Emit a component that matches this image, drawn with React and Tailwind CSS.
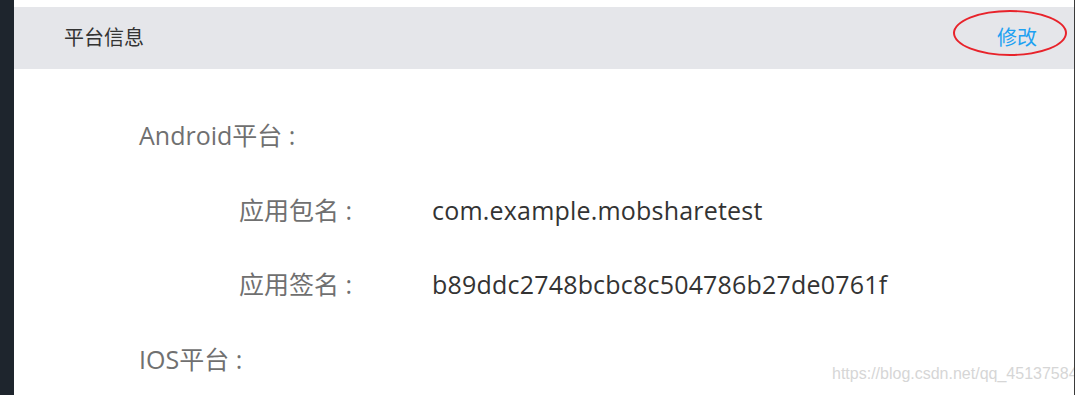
import React from 'react';

const font = { fontFamily: '"Open Sans", "Noto Sans CJK SC", sans-serif' };

const rows = [
  { label: '应用包名 :', value: 'com.example.mobsharetest', gap: 'mt-[41px]' },
  { label: '应用签名 :', value: 'b89ddc2748bcbc8c504786b27de0761f', gap: 'mt-[40px]' },
];

const App = () => {
  return (
    <div className="flex h-[395px] w-[1084px] overflow-hidden bg-white" style={font}>
      <div className="w-[14px] shrink-0 bg-[#1e252d]" />
      <div className="relative flex w-[1061px] shrink-0 flex-col overflow-hidden border-r border-[#3a3a3a] pt-[7px]">
        <div className="flex h-[62px] shrink-0 items-center justify-between bg-[#e5e6ea] pl-[50px] pr-[37px]">
          <span className="text-[20px] text-[#333]">平台信息</span>
          <span className="relative text-[20px] text-[#1da1f2]">
            修改
            <span className="absolute left-[-44px] top-[-13px] h-[46px] w-[114px] rounded-[50%] border-2 border-[#e8232b]" />
          </span>
        </div>
        <div className="flex flex-col pl-[125px] text-[25px] leading-[34px]">
          <div className="mt-[49px] text-[#707070]">Android平台 :</div>
          {rows.map((r) => (
            <div key={r.label} className={`${r.gap} flex`}>
              <span className="w-[193px] shrink-0 pl-[100px] text-[#707070] box-content">{r.label}</span>
              <span className="tracking-[0.2px] text-[#333]">{r.value}</span>
            </div>
          ))}
          <div className="mt-[41px] text-[#707070]">IOS平台 :</div>
        </div>
        <div className="absolute left-[818px] top-[362px] whitespace-nowrap text-[16px] text-[#d6d6d6]" style={{ fontFamily: '"Liberation Sans", Arial, sans-serif' }}>
          https://blog.csdn.net/qq_45137584
        </div>
      </div>
    </div>
  );
};

export default App;
